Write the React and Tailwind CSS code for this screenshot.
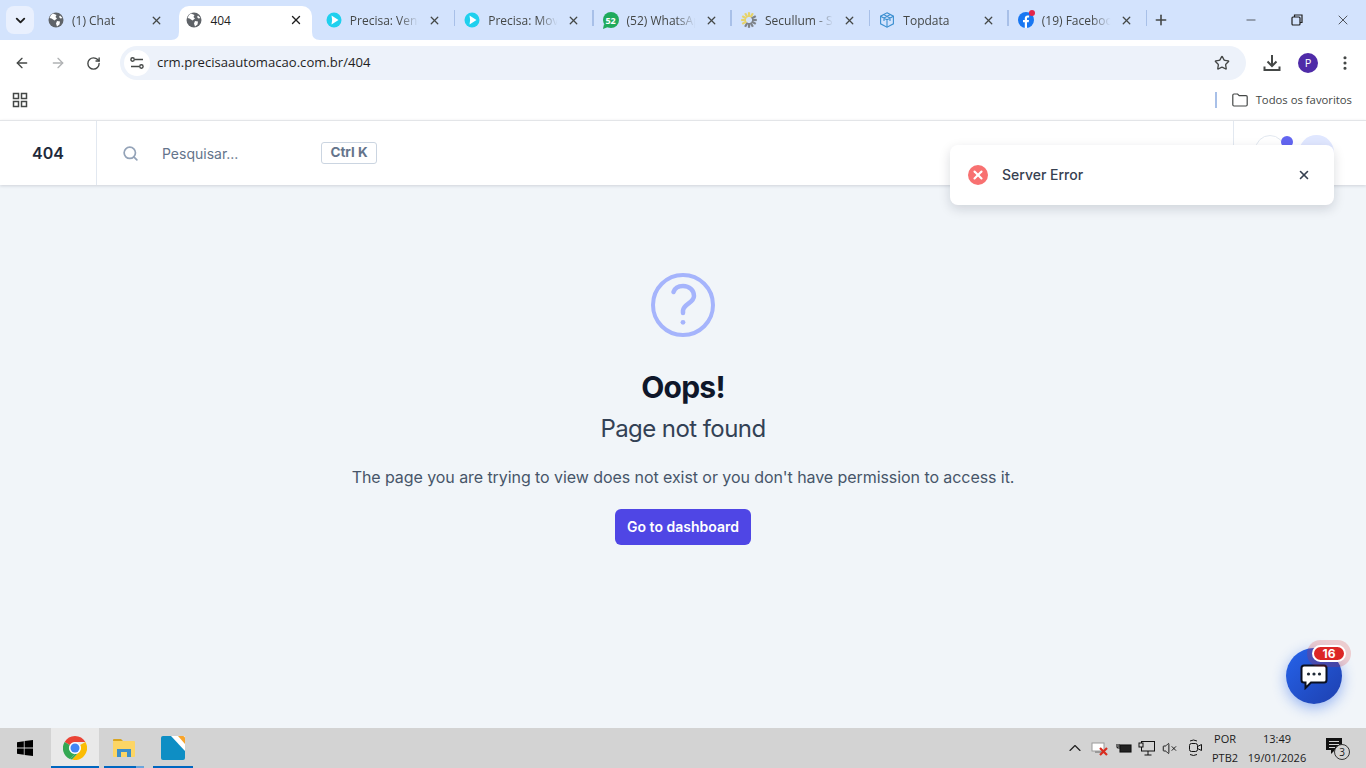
import { ArrowLeft, ArrowRight, RotateCw, Star, EllipsisVertical, Search, X, Plus, ChevronDown, ChevronUp, Minus, VolumeX } from 'lucide-react'

function Globe() {
  return (
    <svg width="16" height="16" viewBox="0 0 16 16" className="shrink-0">
      <circle cx="8" cy="8" r="7.5" fill="#5f6368" />
      <path d="M5 1.5 L8.5 3 L7.5 5 L9 6.5 L6.5 8.5 L3.5 6.5 L1.5 6 L3 3Z M9 9 L12 9.5 L11.5 12.5 L9 14.5 L8 11.5Z M12 3.5 L14.5 6 L12.5 6.5 L11 5Z" fill="#fff" />
    </svg>
  )
}

function PlayIcon() {
  return (
    <svg width="16" height="16" viewBox="0 0 16 16" className="shrink-0">
      <circle cx="8" cy="8" r="7.5" fill="#1fd0ee" />
      <path d="M5.5 3.5 L12.5 8 L5.5 12.5 Q6.8 8 5.5 3.5Z" fill="#fff" />
    </svg>
  )
}

function WhatsIcon() {
  return (
    <div className="relative shrink-0 w-4 h-4 rounded-full bg-[#1faa5c] flex items-center justify-center text-[9px] font-bold text-white leading-none font-['Open_Sans',sans-serif]">
      52
      <svg width="5" height="5" viewBox="0 0 5 5" className="absolute left-0 bottom-[-1px]"><path d="M0 5 L1 0 L5 3Z" fill="#1faa5c" /></svg>
    </div>
  )
}

function SpinnerIcon() {
  const rays = [0, 30, 60, 90, 120, 150, 180, 210, 240, 270, 300, 330]
  return (
    <svg width="16" height="16" viewBox="0 0 16 16" className="shrink-0">
      {rays.map((r, i) => (
        <line key={r} x1="8" y1="5" x2="8" y2="0.2" stroke={i < 2 || i > 7 ? '#e6d36a' : '#7d8288'} strokeWidth="2.2" transform={`rotate(${r} 8 8)`} />
      ))}
    </svg>
  )
}

function CubeIcon() {
  return (
    <svg width="16" height="16" viewBox="0 0 16 16" fill="none" stroke="#3b8fd0" strokeWidth="1.1" className="shrink-0">
      <path d="M8 .8 L14.4 4.2 V11.8 L8 15.2 L1.6 11.8 V4.2Z" />
      <path d="M1.6 4.2 L8 7.8 L14.4 4.2 M8 7.8 V15.2 M4.6 2.5 L11 6 V9 M11.4 2.5 L5 6 V9" />
    </svg>
  )
}

function FacebookIcon() {
  return (
    <div className="relative shrink-0 w-4 h-4">
      <svg width="16" height="16" viewBox="0 0 16 16">
        <circle cx="8" cy="8" r="8" fill="#1877f2" />
        <path d="M6.8 16 V10.2 H5 V8 H6.8 V6.3 C6.8 4.4 7.9 3.4 9.6 3.4 L11.1 3.5 V5.4 H10.1 C9.2 5.4 9 5.9 9 6.5 V8 H11 L10.7 10.2 H9 V16Z" fill="#fff" />
      </svg>
      <div className="absolute right-[-1px] top-[-2px] w-[6px] h-[6px] rounded-full bg-[#e4254a]" />
    </div>
  )
}

const tabs = [
  { title: '(1) Chat', icon: <Globe /> },
  { title: '404', icon: <Globe />, active: true },
  { title: 'Precisa: Vendas', icon: <PlayIcon /> },
  { title: 'Precisa: Movimento', icon: <PlayIcon /> },
  { title: '(52) WhatsApp', icon: <WhatsIcon /> },
  { title: 'Secullum - Sistema', icon: <SpinnerIcon /> },
  { title: 'Topdata', icon: <CubeIcon /> },
  { title: '(19) Facebook', icon: <FacebookIcon /> },
]

function Tab({ tab, showSep }) {
  if (tab.active) {
    return (
      <div className="relative w-[139.4px] h-[34px] shrink-0 self-end">
        <svg width="8" height="8" viewBox="0 0 8 8" className="absolute left-[-7px] bottom-0 z-10"><path d="M8 0 V8 H0 Q8 8 8 0Z" fill="#fff" /></svg>
        <svg width="8" height="8" viewBox="0 0 8 8" className="absolute right-[-2px] bottom-0 z-10"><path d="M0 0 V8 H8 Q0 8 0 0Z" fill="#fff" /></svg>
        <div className="absolute left-[1px] right-[6px] top-0 bottom-0 bg-white rounded-t-[10px] z-10 flex items-center pl-[7px] pr-[9px] pb-[6px] gap-[8px]">
          <Globe />
          <span className="flex-1 pt-[2px] text-xs text-[#1f1f1f] whitespace-nowrap overflow-hidden">{tab.title}</span>
          <X size={14} strokeWidth={2.4} className="text-[#1f1f1f]" />
        </div>
      </div>
    )
  }
  return (
    <div className="relative w-[138.4px] h-[34px] shrink-0 self-end flex items-center pl-[8px] pr-[15px] pb-[6px] gap-[8px]">
      {tab.icon}
      <span className="flex-1 min-w-0 pt-[2px] text-xs text-[#444746] whitespace-nowrap overflow-hidden [mask-image:linear-gradient(to_right,black_70%,transparent_98%)]">{tab.title}</span>
      <X size={13} strokeWidth={2.4} className="text-[#444746] shrink-0" />
      {showSep && <div className="absolute right-[1px] top-[4px] w-[1.5px] h-[16px] bg-[#a8c0e8]" />}
    </div>
  )
}

function ChromeLogo() {
  return (
    <svg width="24" height="24" viewBox="0 0 24 24">
      <path d="M12 0 A12 12 0 0 1 22.4 6 H12 A6 6 0 0 0 6.8 9 L1.6 6 A12 12 0 0 1 12 0Z" fill="#ea4335" />
      <path d="M1.6 6 L6.8 9 A6 6 0 0 0 12 18 L6.8 23 A12 12 0 0 1 1.6 6Z" fill="#34a853" />
      <path d="M22.4 6 A12 12 0 0 1 9 23.6 L14.6 17.4 A6 6 0 0 0 17.2 9 Z" fill="#fbbc04" />
      <path d="M6.8 23 L12 18 A6 6 0 0 0 14.6 17.4 L9 23.6 A12 12 0 0 1 6.8 23Z" fill="#34a853" />
      <circle cx="12" cy="12" r="5.8" fill="#fff" />
      <circle cx="12" cy="12" r="4.5" fill="#4285f4" />
    </svg>
  )
}

function TaskItem({ children, active, partial, width }) {
  return (
    <div className={`relative h-10 flex items-center justify-center ${width} ${active ? 'bg-[#e9e9e9]' : ''}`}>
      {children}
      <div className="absolute left-0 right-0 bottom-0 h-[2px] bg-[#0067c0]" />
      {partial && <div className="absolute right-0 bottom-0 w-2 h-[2px] bg-[#6aa5dc]" />}
    </div>
  )
}

export default function App() {
  return (
    <div className="relative w-[1366px] h-[768px] overflow-hidden flex flex-col bg-white font-['Open_Sans',sans-serif]">
      {/* tab strip */}
      <div className="h-10 shrink-0 bg-[#d3e3fd] flex items-end">
        <div className="w-10 h-10 shrink-0 flex items-center justify-center">
          <div className="w-7 h-7 rounded-lg bg-[#e9f0fe] flex items-center justify-center">
            <ChevronDown size={15} strokeWidth={3} className="text-[#1f1f1f]" />
          </div>
        </div>
        {tabs.map((t, i) => (
          <Tab key={t.title} tab={t} showSep={i > 1} />
        ))}
        <div className="w-8 h-10 flex items-center justify-center shrink-0 ml-[-3px]">
          <Plus size={16} strokeWidth={2.4} className="text-[#444746]" />
        </div>
        <div className="flex-1" />
        <div className="flex h-10 items-center shrink-0">
          <div className="w-[46px] flex justify-center"><Minus size={14} strokeWidth={1.2} className="text-[#1f1f1f]" /></div>
          <div className="w-[46px] flex justify-center">
            <svg width="12" height="12" viewBox="0 0 12 12" fill="none" stroke="#1f1f1f" strokeWidth="1.2"><rect x="1" y="3" width="8" height="8" rx="1" /><path d="M3.5 3 V1 H11 V8.5 H9" /></svg>
          </div>
          <div className="w-[46px] flex justify-center"><X size={16} strokeWidth={1.1} className="text-[#1f1f1f]" /></div>
        </div>
      </div>

      {/* toolbar */}
      <div className="h-[46px] shrink-0 bg-white rounded-t-[10px] flex items-center py-[6px] pl-[14px] pr-[12px]">
        <ArrowLeft size={16} strokeWidth={2} className="text-[#444746]" />
        <ArrowRight size={16} strokeWidth={2} className="text-[#b0b2b4] ml-5" />
        <RotateCw size={15} strokeWidth={2.2} className="text-[#444746] ml-5" />
        <div className="ml-[19px] w-[1126px] h-[34px] rounded-full bg-[#edf2fa] flex items-center pl-1 pr-4">
          <div className="w-[26px] h-[26px] rounded-full bg-white flex items-center justify-center">
            <svg width="14" height="14" viewBox="0 0 14 14" fill="none" stroke="#444746" strokeWidth="1.4"><path d="M5 3.5 H13 M1 10.5 H9" /><circle cx="2.6" cy="3.5" r="1.7" /><circle cx="11.4" cy="10.5" r="1.7" /></svg>
          </div>
          <span className="ml-[7px] flex-1 text-[13.1px] text-[#1f1f1f]">crm.precisaautomacao.com.br/404</span>
          <Star size={16} strokeWidth={2} className="text-[#444746]" />
        </div>
        <div className="flex-1" />
        <svg width="18" height="18" viewBox="0 0 18 18" fill="none" stroke="#444746" strokeWidth="2"><path d="M9 1 V11.5 M4.5 7.5 L9 12 L13.5 7.5 M1.5 12.5 V16 H16.5 V12.5" /></svg>
        <div className="ml-[17px] w-5 h-5 rounded-full bg-[#4f2ba8] flex items-center justify-center text-[11px] text-white">P</div>
        <EllipsisVertical size={18} strokeWidth={2.2} className="text-[#444746] ml-[18px]" />
      </div>

      {/* bookmarks */}
      <div className="h-[34px] shrink-0 bg-white flex items-center pb-[6px] pl-3 pr-[14px]">
        <svg width="16" height="16" viewBox="0 0 16 16" fill="none" stroke="#444746" strokeWidth="1.5"><rect x="1.5" y="1.5" width="5" height="5" /><rect x="9.5" y="1.5" width="5" height="5" /><rect x="1.5" y="9.5" width="5" height="5" /><rect x="9.5" y="9.5" width="5" height="5" /></svg>
        <div className="flex-1" />
        <div className="w-[1.5px] h-4 bg-[#a8c0e8] mr-[15px]" />
        <svg width="16" height="14" viewBox="0 0 16 14" fill="none" stroke="#444746" strokeWidth="1.2"><path d="M.8 2.2 Q.8 1 2 1 H5.6 L7.2 2.6 H14 Q15.2 2.6 15.2 3.8 V11.8 Q15.2 13 14 13 H2 Q.8 13 .8 11.8Z" /></svg>
        <span className="ml-2 text-[11.3px] text-[#444746]">Todos os favoritos</span>
      </div>

      {/* app */}
      <div className="flex-1 min-h-0 flex flex-col bg-[#f1f5f9] font-['Inter',sans-serif]">
        <header className="h-[65px] shrink-0 bg-white border-t border-[#e3e5e8] shadow-[0_1px_3px_rgba(15,23,42,0.15)] flex">
          <div className="w-[97px] shrink-0 border-r border-[#e2e8f0] flex items-center justify-center text-base font-semibold text-[#1e293b]">404</div>
          <div className="flex items-center flex-1">
            <Search size={17} strokeWidth={2.4} className="text-[#94a3b8] ml-[25px]" />
            <span className="ml-[23px] w-[159px] pt-[2px] text-sm text-[#64748b]">Pesquisar...</span>
            <span className="mb-[1px] h-[22px] w-[56px] rounded-[3px] border border-[#cbd5e1] flex items-center justify-center text-[13.5px] font-bold text-[#64748b]">Ctrl K</span>
          </div>
          <div className="w-[133px] shrink-0 border-l border-[#e2e8f0] flex items-start pt-[14px] pl-[21px]">
            <div className="relative w-[30px] h-[30px] rounded-full border border-[#e2e8f0] bg-white">
              <div className="absolute right-[-9px] top-0 w-3 h-3 rounded-full bg-[#6366f1]" />
            </div>
            <div className="ml-[14px] w-[35px] h-[35px] rounded-full bg-[#e0e7ff]" />
          </div>
        </header>

        <main className="flex-1 flex flex-col items-center pt-[88px]">
          <svg width="64" height="64" viewBox="0 0 64 64" fill="none" stroke="#a5b4fc" strokeWidth="4" strokeLinecap="round">
            <circle cx="32" cy="32" r="30" />
            <path strokeWidth="4.5" d="M22.5 19 C24 14.5 28 13 32 13 C38.5 13 43 17.5 43 23 C43 30 33 30.5 32 37.5 V40" />
            <circle cx="32" cy="49.3" r="2.4" fill="#a5b4fc" stroke="none" />
          </svg>
          <h1 className="mt-[32px] text-3xl leading-9 font-bold tracking-tight text-[#0f172a]">Oops!</h1>
          <h2 className="mt-[8px] text-2xl leading-8 tracking-[-0.57px] text-[#334155]">Page not found</h2>
          <p className="mt-[20px] text-base leading-6 tracking-[-0.07px] text-[#475569]">The page you are trying to view does not exist or you don't have permission to access it.</p>
          <button className="mt-5 h-9 w-[136px] rounded-md bg-[#4f46e5] text-sm font-semibold text-white">Go to dashboard</button>
        </main>
      </div>

      {/* taskbar */}
      <div className="h-10 shrink-0 bg-[#d3d3d3] flex items-center font-['Open_Sans',sans-serif] text-xs text-[#1a1a1a]">
        <div className="w-[48px] ml-[1px] flex items-center justify-center">
          <svg width="16" height="16" viewBox="0 0 16 16" fill="#000"><path d="M0 2.2 L6.8 1.2 V7.6 H0Z M7.6 1.1 L16 0 V7.6 H7.6Z M0 8.4 H6.8 V14.8 L0 13.8Z M7.6 8.4 H16 V16 L7.6 14.9Z" /></svg>
        </div>
        <TaskItem active width="w-[48px] ml-[2px]"><ChromeLogo /></TaskItem>
        <TaskItem partial width="w-[40px] ml-[5px]">
          <svg width="22" height="20" viewBox="0 0 22 20">
            <path d="M0 2 Q0 1 1 1 H8 L10 3 H0Z" fill="#d9a520" />
            <rect x="0" y="3" width="22" height="16" rx="1" fill="#fcd565" />
            <rect x="4" y="11" width="14" height="8" fill="#3d8fc9" />
            <rect x="8" y="14" width="6" height="5" fill="#fcd565" />
          </svg>
        </TaskItem>
        <TaskItem width="w-[40px] ml-[9px]">
          <svg width="24" height="24" viewBox="0 0 24 24">
            <rect width="24" height="24" rx="2" fill="#0e8ec4" />
            <path d="M10 0 H24 V15Z" fill="#fff" />
            <path d="M17 0 H22 Q24 0 24 2 V8Z" fill="#f7a42c" />
          </svg>
        </TaskItem>
        <div className="flex-1" />
        <ChevronUp size={20} strokeWidth={1.4} className="text-[#222]" />
        <svg width="18" height="16" viewBox="0 0 18 16" className="ml-[6px]">
          <rect x="1" y="3" width="12" height="8" fill="#fff" stroke="#9a9a9a" />
          <rect x="4" y="11" width="8" height="2" fill="#9a9a9a" />
          <path d="M9 8 L16 15 M16 8 L9 15" stroke="#d92d20" strokeWidth="2.2" />
        </svg>
        <svg width="16" height="12" viewBox="0 0 16 12" fill="none" stroke="#111" strokeWidth="1.1" className="ml-[7px]">
          <rect x="4" y="3" width="11" height="7" fill="#222" />
          <path d="M1 2 V5 Q1 6 2.5 6 H4 M3 2 V5" />
        </svg>
        <svg width="17" height="15" viewBox="0 0 17 15" fill="none" stroke="#111" strokeWidth="1" className="ml-[6px]">
          <rect x="3.5" y=".5" width="13" height="9.5" />
          <rect x="1" y="2" width="4" height="4" fill="#d3d3d3" />
          <path d="M10 10 V14 M6.5 14 H13.5" />
        </svg>
        <VolumeX size={15} strokeWidth={1.5} className="text-[#111] ml-[7px]" />
        <svg width="16" height="18" viewBox="0 0 16 18" fill="none" stroke="#111" strokeWidth="1" className="ml-[11px]">
          <rect x="1.5" y="4.5" width="8" height="8" rx="2" />
          <path d="M9.5 7.5 L13.5 5.5 V11.5 L9.5 9.5 M2 2 Q5.5 0 9 2 M2 15.5 Q5.5 17.5 9 15.5" />
        </svg>
        <div className="ml-[4px] w-[34px] text-center leading-[19px] text-[11px]">
          <div>POR</div>
          <div>PTB2</div>
        </div>
        <div className="ml-[4px] w-[62px] text-center leading-[19px] text-[11px]">
          <div>13:49</div>
          <div>19/01/2026</div>
        </div>
        <div className="relative ml-[18px] mr-[20px] w-5 h-5">
          <svg width="17" height="16" viewBox="0 0 17 16" className="absolute left-0 top-0"><path d="M0 0 H16 V12 H9 L5 16 V12 H0Z" fill="#111" /><path d="M3 3.5 H13 M3 6.5 H13 M3 9.5 H9" stroke="#d3d3d3" /></svg>
          <div className="absolute left-[8px] top-[6px] w-4 h-4 rounded-full bg-[#d3d3d3] border border-[#333] flex items-center justify-center text-[10px] leading-none">3</div>
        </div>
      </div>

      {/* toast */}
      <div className="absolute left-[950px] top-[145px] w-[384px] h-[60px] rounded-lg bg-white shadow-[0_4px_12px_rgba(15,23,42,0.15)] flex items-center px-[18px] font-['Inter',sans-serif]">
        <div className="w-5 h-5 rounded-full bg-[#f87171] flex items-center justify-center">
          <X size={14} strokeWidth={3.6} className="text-white" />
        </div>
        <span className="ml-[14px] flex-1 text-sm font-medium text-[#374151]">Server Error</span>
        <X size={14} strokeWidth={2.8} className="text-[#374151] mr-[5px]" />
      </div>

      {/* chat bubble */}
      <div className="absolute left-[1286px] top-[648px] w-14 h-14 rounded-full bg-gradient-to-br from-[#2563eb] to-[#1e40af] shadow-[0_4px_14px_rgba(37,99,235,0.45)] flex items-center justify-center font-['Inter',sans-serif]">
        <svg width="28" height="26" viewBox="0 0 28 26" className="mt-[2px]">
          <path d="M4 1.5 H24 Q26.5 1.5 26.5 4 V16 Q26.5 18.5 24 18.5 H11 L5.5 24 V18.5 H4 Q1.5 18.5 1.5 16 V4 Q1.5 1.5 4 1.5Z" fill="#fff" stroke="#0b1020" strokeWidth="2" />
          <circle cx="8.5" cy="10" r="1.6" fill="#1f2937" /><circle cx="14" cy="10" r="1.6" fill="#1f2937" /><circle cx="19.5" cy="10" r="1.6" fill="#1f2937" />
        </svg>
        <div className="absolute left-[26px] top-[-3px] w-[34px] h-[17px] rounded-full bg-[#dc2626] border-2 border-white shadow-[0_0_0_5px_rgba(220,38,38,0.2)] flex items-center justify-center text-[12px] font-bold text-white">16</div>
      </div>
    </div>
  )
}
